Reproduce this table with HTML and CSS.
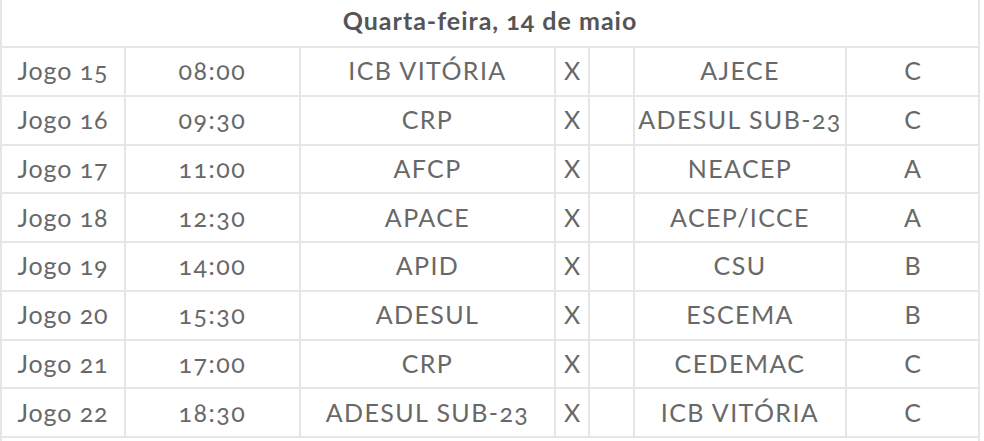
FILE: index.html
```html
<!DOCTYPE html>
<html lang="pt-BR">
<head>
<meta charset="utf-8">
<title>Quarta-feira, 14 de maio</title>
<link rel="stylesheet" href="styles.css">
</head>
<body>
<table class="schedule">
  <colgroup>
    <col class="c-game"><col class="c-time"><col class="c-home"><col class="c-x"><col class="c-gap"><col class="c-away"><col class="c-group">
  </colgroup>
  <thead>
    <tr class="day"><th colspan="7">Quarta-feira, 14 de maio</th></tr>
  </thead>
  <tbody>
    <tr><td>Jogo 15</td><td>08:00</td><td>ICB VITÓRIA</td><td>X</td><td></td><td>AJECE</td><td>C</td></tr>
    <tr><td>Jogo 16</td><td>09:30</td><td>CRP</td><td>X</td><td></td><td>ADESUL SUB-23</td><td>C</td></tr>
    <tr><td>Jogo 17</td><td>11:00</td><td>AFCP</td><td>X</td><td></td><td>NEACEP</td><td>A</td></tr>
    <tr><td>Jogo 18</td><td>12:30</td><td>APACE</td><td>X</td><td></td><td>ACEP/ICCE</td><td>A</td></tr>
    <tr><td>Jogo 19</td><td>14:00</td><td>APID</td><td>X</td><td></td><td>CSU</td><td>B</td></tr>
    <tr><td>Jogo 20</td><td>15:30</td><td>ADESUL</td><td>X</td><td></td><td>ESCEMA</td><td>B</td></tr>
    <tr><td>Jogo 21</td><td>17:00</td><td>CRP</td><td>X</td><td></td><td>CEDEMAC</td><td>C</td></tr>
    <tr><td>Jogo 22</td><td>18:30</td><td>ADESUL SUB-23</td><td>X</td><td></td><td>ICB VITÓRIA</td><td>C</td></tr>
    <tr class="day next"><td colspan="7"></td></tr>
  </tbody>
</table>
</body>
</html>
```

FILE: styles.css
```css
html, body {
  margin: 0;
  padding: 0;
  background: #ffffff;
}

body {
  overflow: hidden;
  font-family: Lato, "Open Sans", "Liberation Sans", sans-serif;
  font-variant-numeric: oldstyle-nums;
  color: #686868;
}

.schedule {
  width: 980px;
  table-layout: fixed;
  border-collapse: collapse;
}

.c-game { width: 124px; }
.c-time { width: 175px; }
.c-home { width: 255px; }
.c-x { width: 34px; }
.c-gap { width: 45px; }
.c-away { width: 212px; }
.c-group { width: 133px; }

.schedule th,
.schedule td {
  border: 2px solid #e6e6e6;
  padding: 0;
  text-align: center;
  vertical-align: middle;
  white-space: nowrap;
}

.schedule td {
  font-size: 25px;
  font-weight: 400;
  padding-bottom: 2px;
  box-sizing: border-box;
}

/* widen the narrow fallback face toward the reference's wide letters */
.schedule td:nth-child(1) { letter-spacing: 0.9px; }
.schedule td:nth-child(2) { letter-spacing: 1.5px; }
.schedule td:nth-child(3),
.schedule td:nth-child(6) { letter-spacing: 1.4px; }

.schedule tbody tr {
  height: 48.75px;
}

.day th {
  border-top: none;
  height: 47px;
  padding-bottom: 6px;
  box-sizing: border-box;
  font-size: 25px;
  font-weight: 700;
  letter-spacing: 1px;
  color: #555555;
}

.next td {
  height: 20px;
}
```
